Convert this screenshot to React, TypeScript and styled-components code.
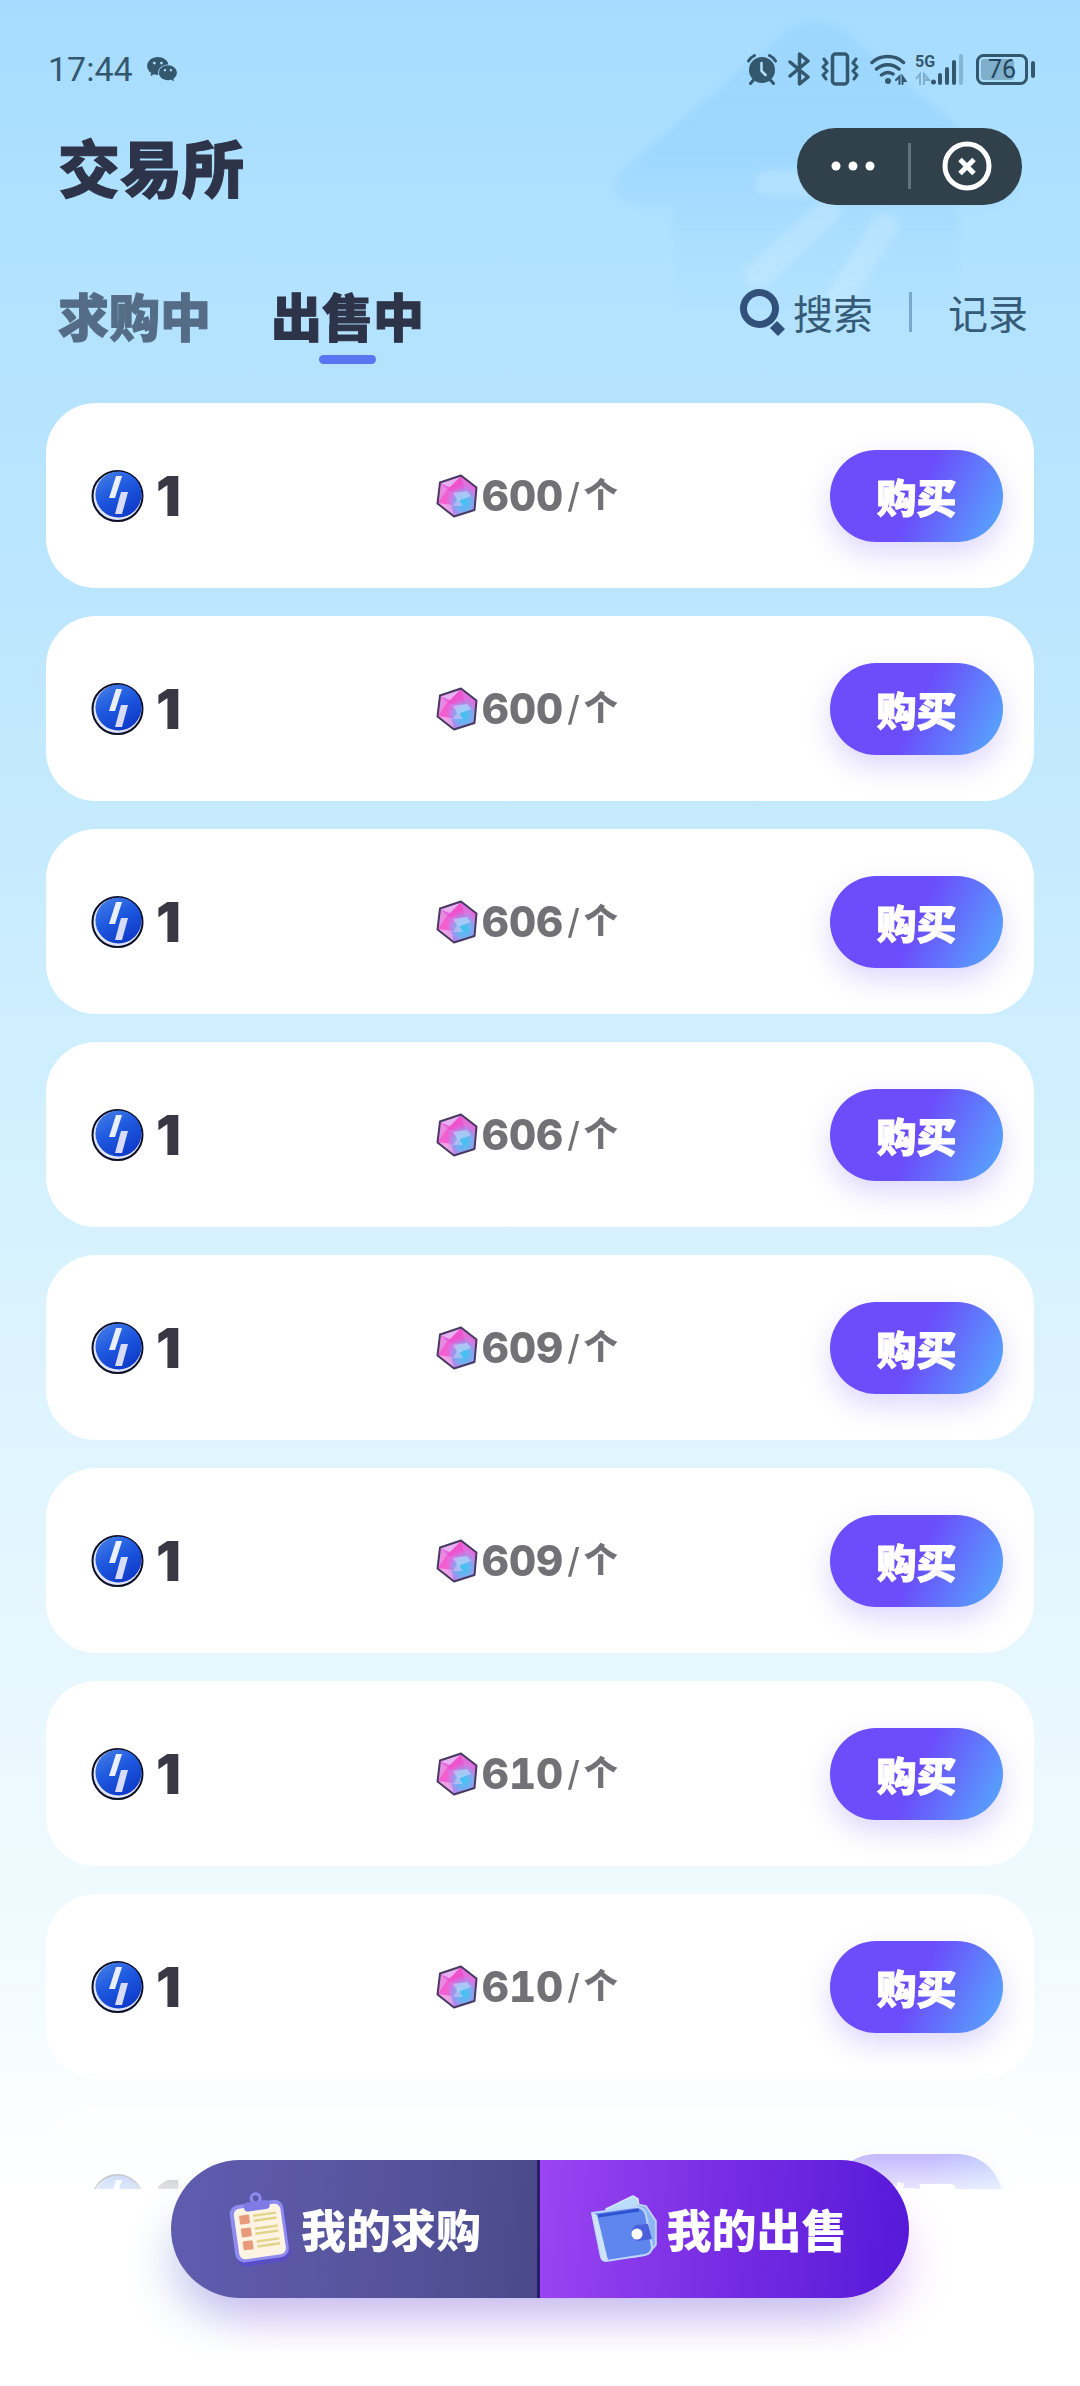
import React from 'react';
import styled, { createGlobalStyle } from 'styled-components';
import { AiFillWechat } from 'react-icons/ai';

const GlobalStyle = createGlobalStyle`
  * { box-sizing: border-box; }
  body { margin: 0; background: #fff; }
  button { border: 0; padding: 0; margin: 0; background: none; font: inherit; color: inherit; cursor: pointer; }
  svg { display: block; flex: none; }
`;

const Page = styled.div`
  position: relative;
  display: flex;
  flex-direction: column;
  height: 100vh;
  overflow: hidden;
  background: linear-gradient(180deg, #a6dcff 0%, #b2e2ff 12%, #bce6fe 25%, #cdeefe 42%, #e1f5fe 62%, #f2fbff 83%, #ffffff 92%);
  font-family: 'Noto Sans', 'Noto Sans CJK SC', sans-serif;
  color: #2d3348;
`;

const Backdrop = styled.svg`
  position: absolute;
  top: 0;
  right: 40px;
  filter: blur(3px);
`;

const StatusBar = styled.div`
  position: relative;
  display: flex;
  align-items: center;
  justify-content: space-between;
  height: 38px;
  margin-top: 50px;
  padding: 0 45px 0 48px;
  color: #33586e;
`;

const StatusGroup = styled.div<{ $gap: number }>`
  display: flex;
  align-items: center;
  gap: ${(p) => p.$gap}px;
`;

const Clock = styled.time`
  font: 400 34px/38px Roboto, sans-serif;
`;

const Header = styled.header`
  position: relative;
  display: flex;
  align-items: center;
  justify-content: space-between;
  margin-top: 33px;
  padding: 0 58px;
  height: 90px;
`;

const Title = styled.h1`
  margin: 0;
  font: 900 62px/90px 'Noto Sans CJK SC', sans-serif;
  -webkit-text-stroke: 1px currentColor;
`;

const Capsule = styled.div`
  display: flex;
  align-items: center;
  width: 225px;
  height: 77px;
  border-radius: 39px;
  background: #30414c;
  color: #fff;
`;

const CapsuleButton = styled.button`
  display: flex;
  flex: 1;
  align-items: center;
  justify-content: center;
  height: 100%;
`;

const CapsuleRule = styled.span`
  width: 3px;
  height: 46px;
  background: #64727c;
`;

const Toolbar = styled.nav`
  position: relative;
  display: flex;
  align-items: flex-start;
  justify-content: space-between;
  margin-top: 70px;
  padding: 0 52px 0 58px;
`;

const Tabs = styled.div`
  display: flex;
  gap: 60px;
`;

const Tab = styled.button<{ $active?: boolean }>`
  display: flex;
  flex-direction: column;
  gap: 6px;
  align-items: center;
  font: 900 51px/68px 'Noto Sans CJK SC', sans-serif;
  -webkit-text-stroke: 1px currentColor;
  color: ${(p) => (p.$active ? '#2d3348' : '#546c86')};

  &::after {
    content: '';
    width: 57px;
    height: 9px;
    border-radius: 5px;
    background: ${(p) => (p.$active ? '#5876f1' : 'transparent')};
  }
`;

const Actions = styled.div`
  display: flex;
  align-items: center;
  height: 62px;
`;

const Action = styled.button`
  display: flex;
  align-items: center;
  gap: 8px;
  font: 400 40px/60px 'Noto Sans CJK SC', sans-serif;
  color: #355b78;
`;

const ActionRule = styled.span`
  width: 3px;
  height: 40px;
  margin: 0 36px;
  background: #77a9cb;
`;

const List = styled.ul`
  position: relative;
  display: flex;
  flex: 1;
  flex-direction: column;
  gap: 28px;
  min-height: 0;
  margin: 39px 0 0;
  padding: 0 46px;
  overflow-y: auto;
  scrollbar-width: none;
  list-style: none;
  mask-image: linear-gradient(180deg, #000 calc(100% - 120px), rgba(0, 0, 0, 0.14) 100%);
`;

const Card = styled.li`
  display: grid;
  flex: none;
  grid-template-columns: 7fr 8fr auto;
  align-items: center;
  height: 185px;
  padding: 0 31px 0 45px;
  border-radius: 50px;
  background: #fff;
`;

const Amount = styled.div`
  display: flex;
  align-items: center;
  gap: 12px;
  font: 900 55px/60px Inter, sans-serif;
  color: #3a3745;
`;

const Price = styled.div`
  display: flex;
  align-items: center;
  gap: 4px;
  color: #717176;
`;

const PriceValue = styled.span`
  font: 800 42px/60px Inter, sans-serif;
  font-variant-numeric: tabular-nums;
`;

const PriceUnit = styled.span`
  display: flex;
  padding-bottom: 6px;
  font: 900 34px/52px 'Noto Sans CJK SC', sans-serif;
`;

const Slash = styled.span`
  font: 500 34px/52px Inter, 'Noto Sans', sans-serif;
`;

const BuyButton = styled.button`
  width: 173px;
  height: 92px;
  border-radius: 46px;
  background: linear-gradient(115deg, #6b4dfb 50%, #589efd 92%);
  box-shadow: 0 12px 28px rgba(107, 77, 251, 0.22);
  font: 900 40px/88px 'Noto Sans CJK SC', sans-serif;
  -webkit-text-stroke: 1px currentColor;
  color: #fff;
`;

const Dock = styled.footer`
  position: relative;
  display: grid;
  grid-template-columns: 1fr 1fr;
  align-self: center;
  width: 738px;
  max-width: 90%;
  margin: -29px 0 88px;
  border-radius: 69px;
  box-shadow:
    -16px 32px 40px -12px rgba(90, 120, 210, 0.28),
    16px 32px 40px -12px rgba(190, 80, 240, 0.22);
`;

const DockButton = styled.button<{ $primary?: boolean }>`
  display: flex;
  align-items: center;
  justify-content: center;
  gap: 8px;
  height: 138px;
  padding-right: ${(p) => (p.$primary ? '12px' : '0')};
  border-radius: ${(p) => (p.$primary ? '0 69px 69px 0' : '69px 0 0 69px')};
  border-right: ${(p) => (p.$primary ? '0' : '3px solid #2a1b6c')};
  background: ${(p) =>
    p.$primary
      ? 'linear-gradient(95deg, #9b45f3 0%, #7a2fe4 45%, #5519d8 100%)'
      : 'linear-gradient(95deg, #605cb0 0%, #58559f 50%, #4a4a8a 100%)'};
  font: 900 45px/66px 'Noto Sans CJK SC', sans-serif;
  color: #fff;
`;

const AlarmIcon = () => (
  <svg width="30" height="32" viewBox="0 0 30 32" fill="none" stroke="currentColor" strokeLinecap="round">
    <circle cx="15" cy="17" r="13" fill="currentColor" stroke="none" />
    <path d="M1.500 8A13 13 0 0 1 7.500 2.500M28.500 8A13 13 0 0 0 22.500 2.500M6.500 27L3.500 30.500M23.500 27L26.500 30.500" strokeWidth="3" />
    <path d="M14.500 10V18L18.500 22" stroke="#b5e0fb" strokeWidth="2.500" />
  </svg>
);

const BluetoothIcon = () => (
  <svg width="22" height="34" viewBox="0 0 22 34" fill="none" stroke="currentColor" strokeWidth="3.500" strokeLinejoin="round" strokeLinecap="round">
    <path d="M2 10L20 25L11.500 32V2L20 9L2 24" />
  </svg>
);

const VibrateIcon = () => (
  <svg width="38" height="34" viewBox="0 0 38 34" fill="none" stroke="currentColor" strokeLinejoin="round" strokeLinecap="round">
    <rect x="11.500" y="2" width="15" height="30" rx="3" strokeWidth="3.500" />
    <path d="M3 7L6 11L2 15L6 19L2 23L5 27M35 7L32 11L36 15L32 19L36 23L33 27" strokeWidth="3" />
  </svg>
);

const WifiIcon = () => (
  <svg width="37" height="32" viewBox="0 0 37 32" fill="none" stroke="currentColor" strokeLinecap="round">
    <path d="M2 9.500A24 24 0 0 1 33.500 9.500M6.500 16A17 17 0 0 1 29 16M11.500 22A10.500 10.500 0 0 1 23 21" strokeWidth="3.500" />
    <circle cx="18" cy="28" r="3" fill="currentColor" stroke="none" />
    <path d="M26 27L29.500 23.500V31M32.500 31V23.500L35.500 28H33" strokeWidth="2" />
  </svg>
);

const SignalIcon = () => (
  <svg width="50" height="34" viewBox="0 0 50 34" fill="currentColor">
    <text x="0" y="15" fontFamily="Roboto, sans-serif" fontSize="16" fontWeight="700">5G</text>
    <path d="M1 27L5 22V33M9 33V22L14 28H10" fill="none" stroke="currentColor" strokeWidth="2" opacity="0.350" />
    <circle cx="18.500" cy="30" r="2.500" />
    <rect x="23" y="21" width="4" height="12" rx="2" />
    <rect x="30" y="15" width="4" height="18" rx="2" />
    <rect x="37" y="8" width="4" height="25" rx="2" />
    <rect x="44" y="2" width="4" height="31" rx="2" opacity="0.300" />
  </svg>
);

const BatteryIcon = () => (
  <svg width="59" height="31" viewBox="0 0 59 31" fill="currentColor">
    <rect x="1.500" y="1.500" width="49" height="28" rx="6" fill="none" stroke="currentColor" strokeWidth="3" />
    <rect x="5" y="5" width="33" height="21" rx="3" opacity="0.350" />
    <rect x="55" y="7" width="4" height="17" rx="2" />
    <text x="26" y="24" textAnchor="middle" fontFamily="Roboto, sans-serif" fontSize="25" fill="#23465f">76</text>
  </svg>
);

const DotsIcon = () => (
  <svg width="44" height="10" viewBox="0 0 44 10" fill="currentColor">
    <circle cx="5" cy="5" r="4.500" />
    <circle cx="22" cy="5" r="4.500" />
    <circle cx="39" cy="5" r="4.500" />
  </svg>
);

const CloseIcon = () => (
  <svg width="50" height="50" viewBox="0 0 50 50" fill="none" stroke="currentColor">
    <circle cx="25" cy="25" r="22" strokeWidth="5" />
    <path d="M18 18.500L32 32.500M32 18.500L18 32.500" strokeWidth="5" />
  </svg>
);

const SearchIcon = () => (
  <svg width="45" height="48" viewBox="0 0 45 48" fill="none" stroke="#31517a">
    <circle cx="19.500" cy="20.500" r="16" strokeWidth="7" />
    <path d="M33.500 36.500L41.500 44.500" strokeWidth="10" />
  </svg>
);

const CoinIcon = () => (
  <svg width="53" height="54" viewBox="0 0 53 54">
    <defs>
      <linearGradient id="coin" x1="0" y1="0" x2="0.600" y2="1">
        <stop offset="0" stopColor="#4b83e6" />
        <stop offset="0.500" stopColor="#1f5ae0" />
        <stop offset="1" stopColor="#0f3ccb" />
      </linearGradient>
    </defs>
    <circle cx="26.500" cy="27" r="25" fill="#dfe3f8" stroke="#0c0f26" strokeWidth="2" />
    <circle cx="27.500" cy="25.500" r="23" fill="url(#coin)" />
    <path d="M25 7H31L24 29H18Z" fill="#eaf0ff" />
    <path d="M30 23H37L31 45H24Z" fill="#d9dcf8" />
  </svg>
);

const GemIcon = () => (
  <svg width="42" height="44" viewBox="0 0 42 44" strokeLinejoin="round">
    <defs>
      <radialGradient id="gem" cx="0.680" cy="0.660" r="0.450">
        <stop offset="0" stopColor="#35c8f2" />
        <stop offset="0.500" stopColor="#6fb4f2" stopOpacity="0.850" />
        <stop offset="1" stopColor="#c58cf0" stopOpacity="0" />
      </radialGradient>
    </defs>
    <path d="M25 1.500L40.500 13.500L38.500 36L18 42.500L1.500 29.500L4 8.500Z" fill="#e468dc" />
    <path d="M25 2L4 9L16 14Z" fill="#e7b0f0" />
    <path d="M25 2L40 14L29 16Z" fill="#e070dc" />
    <path d="M25 2L29 17L10 17Z" fill="#ee52cc" />
    <path d="M4 9L12 16L2 29Z" fill="#e88ae0" />
    <path d="M12 14L13 32L2 29Z" fill="#f25fd0" />
    <path d="M2 29L16 31L18 42Z" fill="#f0a2e6" />
    <path d="M16 31L38 35L18 42Z" fill="#b07cec" />
    <path d="M25 1.500L40.500 13.500L38.500 36L18 42.500L1.500 29.500L4 8.500Z" fill="url(#gem)" />
    <path d="M17 19L31 17L35 22L22 27Z" fill="#d6e4fd" opacity="0.500" />
    <path d="M17 32L22 24L27 32Z" fill="#e4c8fa" opacity="0.500" />
    <path d="M25 1.500L40.500 13.500L38.500 36L18 42.500L1.500 29.500L4 8.500Z" fill="none" stroke="#473961" strokeWidth="2" />
  </svg>
);

const ClipboardIcon = () => (
  <svg width="66" height="74" viewBox="0 0 66 74">
    <g transform="rotate(-8 33 37)">
      <rect x="6" y="12" width="54" height="60" rx="9" fill="#5a4cc4" />
      <rect x="5" y="10" width="54" height="58" rx="9" fill="#8f8cf0" />
      <rect x="9" y="14" width="47" height="51" rx="6" fill="#fff4e4" />
      <g fill="#e89a7c">
        <rect x="14" y="21" width="10" height="9" rx="1" />
        <rect x="14" y="34" width="10" height="9" rx="1" />
        <rect x="14" y="47" width="10" height="9" rx="1" />
      </g>
      <path d="M28 23H51M28 28H51M28 36H51M28 41H51M28 49H51M28 54H51" stroke="#e3d48c" strokeWidth="2.500" />
      <circle cx="33" cy="6" r="4.500" fill="none" stroke="#8f8cf0" strokeWidth="3" />
      <rect x="20" y="9" width="26" height="9" rx="4" fill="#7f7be6" />
    </g>
  </svg>
);

const WalletIcon = () => (
  <svg width="68" height="68" viewBox="0 0 68 68" strokeLinejoin="round">
    <path d="M16 14L43 1L48 4L50 18L18 20Z" fill="#b9dcfa" stroke="#d6e6ff" strokeWidth="1.500" />
    <path d="M46 9L56 11L66 26L66 50L58 59L44 62Z" fill="#8fb6f4" stroke="#c6dcff" strokeWidth="1.500" />
    <path d="M2 18L46 12Q54 12 56 20L62 52Q62 58 55 60L16 66Q12 66 11 62Z" fill="#5f86ec" stroke="#bcd6ff" strokeWidth="2" />
    <path d="M2 18L7 20L18 65L12 65Z" fill="#cfe4fb" />
    <path d="M8 21L49 15" stroke="#2f52d0" strokeWidth="3" />
    <path d="M58 29L46 30A9 9 0 0 0 48 46L62 44Z" fill="#4a5fdb" />
    <circle cx="47" cy="39" r="5.500" fill="#fff" />
  </svg>
);

const prices = [600, 600, 606, 606, 609, 609, 610, 610, 612];

export default function App() {
  return (
    <>
      <GlobalStyle />
      <Page>
        <Backdrop width="440" height="330" viewBox="0 0 440 330" aria-hidden="true">
          <defs>
            <linearGradient id="roof" x1="0" y1="0" x2="0" y2="1">
              <stop offset="0" stopColor="#86cbff" stopOpacity="0.300" />
              <stop offset="0.450" stopColor="#86cbff" stopOpacity="0.360" />
              <stop offset="1" stopColor="#9ad6ff" stopOpacity="0" />
            </linearGradient>
          </defs>
          <path d="M180 36Q215 8 250 36L410 170Q425 200 390 205H358V310H73V205H35Q5 195 20 172Z" fill="url(#roof)" />
          <path d="M168 183H215M228 212L158 275M285 225L238 300" fill="none" stroke="#fff" strokeWidth="26" strokeLinecap="round" opacity="0.160" />
        </Backdrop>
        <StatusBar>
          <StatusGroup $gap={12}>
            <Clock>17:44</Clock>
            <AiFillWechat size={34} />
          </StatusGroup>
          <StatusGroup $gap={11}>
            <AlarmIcon />
            <BluetoothIcon />
            <VibrateIcon />
            <StatusGroup $gap={8}>
              <WifiIcon />
              <SignalIcon />
            </StatusGroup>
            <BatteryIcon />
          </StatusGroup>
        </StatusBar>
        <Header>
          <Title>交易所</Title>
          <Capsule>
            <CapsuleButton aria-label="更多"><DotsIcon /></CapsuleButton>
            <CapsuleRule />
            <CapsuleButton aria-label="关闭"><CloseIcon /></CapsuleButton>
          </Capsule>
        </Header>
        <Toolbar>
          <Tabs>
            <Tab>求购中</Tab>
            <Tab $active aria-current="page">出售中</Tab>
          </Tabs>
          <Actions>
            <Action><SearchIcon />搜索</Action>
            <ActionRule />
            <Action>记录</Action>
          </Actions>
        </Toolbar>
        <List>
          {prices.map((price, i) => (
            <Card key={i}>
              <Amount><CoinIcon />1</Amount>
              <Price>
                <GemIcon />
                <PriceValue>{price}</PriceValue>
                <Slash>/</Slash>
                <PriceUnit>个</PriceUnit>
              </Price>
              <BuyButton>购买</BuyButton>
            </Card>
          ))}
        </List>
        <Dock>
          <DockButton><ClipboardIcon />我的求购</DockButton>
          <DockButton $primary><WalletIcon />我的出售</DockButton>
        </Dock>
      </Page>
    </>
  );
}
